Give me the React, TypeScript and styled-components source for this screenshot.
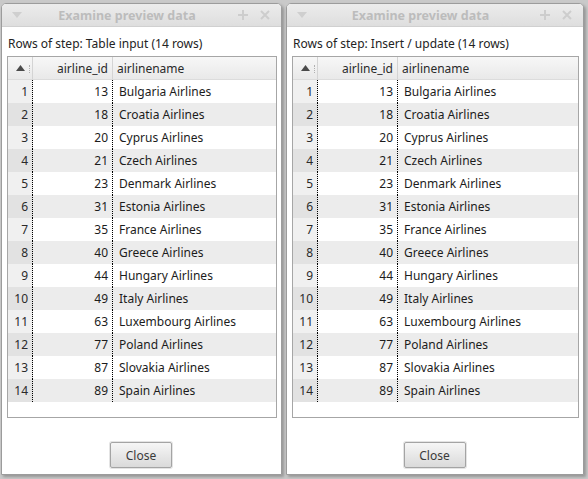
import styled, { createGlobalStyle } from 'styled-components';

const airlines: [number, string][] = [
  [13, 'Bulgaria Airlines'],
  [18, 'Croatia Airlines'],
  [20, 'Cyprus Airlines'],
  [21, 'Czech Airlines'],
  [23, 'Denmark Airlines'],
  [31, 'Estonia Airlines'],
  [35, 'France Airlines'],
  [40, 'Greece Airlines'],
  [44, 'Hungary Airlines'],
  [49, 'Italy Airlines'],
  [63, 'Luxembourg Airlines'],
  [77, 'Poland Airlines'],
  [87, 'Slovakia Airlines'],
  [89, 'Spain Airlines'],
];

const GlobalStyle = createGlobalStyle`
  html, body {
    margin: 0;
    padding: 0;
    background: #c9c9c9;
    font-family: "Noto Sans", "Open Sans", sans-serif;
    overflow: hidden;
  }
`;

const Desktop = styled.div`
  display: flex;
  align-items: flex-start;
  gap: 4px;
  padding: 3px 0 0 1px;
  width: 588px;
  height: 479px;
  box-sizing: border-box;
`;

const Window = styled.div<{ $width: number }>`
  width: ${(p) => p.$width}px;
  height: 472px;
  box-sizing: border-box;
  border: 1px solid #9c9c9c;
  border-radius: 5px 5px 0 0;
  background: #ffffff;
  display: flex;
  flex-direction: column;
  box-shadow: 2px 2px 3px rgba(0, 0, 0, 0.25);
`;

const TitleBar = styled.div`
  height: 22px;
  flex: none;
  display: flex;
  align-items: center;
  padding: 0 9px 0 10px;
  border-radius: 4px 4px 0 0;
  background: linear-gradient(#ececec, #dedede);
  border-bottom: 1px solid #d0d0d0;
`;

const TitleText = styled.div`
  flex: 1;
  text-align: center;
  font-size: 12.5px;
  font-weight: bold;
  color: #bcbcbc;
  padding-left: 4px;
`;

const TitleButton = styled.span`
  width: 14px;
  height: 14px;
  display: flex;
  align-items: center;
  justify-content: center;
  color: #c4c4c4;
  margin-left: 8px;
`;

const Body = styled.div`
  flex: 1;
  display: flex;
  flex-direction: column;
  padding: 0 4px 0 5px;
`;

const StepLabel = styled.div`
  font-size: 12px;
  color: #232323;
  height: 29px;
  line-height: 18px;
  padding: 8px 0 0 1px;
  box-sizing: border-box;
`;

const TableFrame = styled.div`
  height: 362px;
  box-sizing: border-box;
  border: 1px solid #a6a6a6;
  background: #ffffff;
`;

const Grid = styled.div`
  display: grid;
  grid-template-columns: 25px 80px 1fr;
`;

const HeadCell = styled.div<{ $align?: string; $sep?: boolean }>`
  height: 23px;
  box-sizing: border-box;
  display: flex;
  align-items: center;
  justify-content: ${(p) => p.$align ?? 'flex-start'};
  padding: 0 4px 0 4px;
  font-size: 12px;
  color: #2a2a2a;
  background: linear-gradient(#f7f7f7, #e9e9e9);
  border-right: ${(p) => (p.$sep ? '1px solid #d4d4d4' : 'none')};
  border-bottom: 1px solid #dcdcdc;
  position: relative;
`;

const SortDots = styled.span`
  position: absolute;
  right: 2px;
  top: 8px;
  height: 8px;
  border-right: 1px dotted #b0b0b0;
`;

const IndexCell = styled.div<{ $even: boolean }>`
  height: 23px;
  box-sizing: border-box;
  display: flex;
  align-items: center;
  justify-content: flex-end;
  padding-right: 4px;
  font-size: 12px;
  color: #2a2a2a;
  background: ${(p) => (p.$even ? '#e2e2e2' : '#f0f0f0')};
  border-right: 1px dotted #000;
`;

const DataCell = styled.div<{ $even: boolean; $right?: boolean; $dotted?: boolean }>`
  height: 23px;
  box-sizing: border-box;
  display: flex;
  align-items: center;
  justify-content: ${(p) => (p.$right ? 'flex-end' : 'flex-start')};
  padding: ${(p) => (p.$right ? '0 4px 0 0' : '0 0 0 6px')};
  font-size: 12px;
  color: #1c1c1c;
  white-space: nowrap;
  background: ${(p) => (p.$even ? '#ececec' : '#ffffff')};
  border-right: ${(p) => (p.$dotted ? '1px dotted #000' : 'none')};
`;

const Footer = styled.div`
  flex: 1;
  display: flex;
  justify-content: center;
  align-items: flex-start;
  padding-top: 24px;
`;

const Button = styled.button`
  width: 62px;
  height: 26px;
  margin-right: 2px;
  border: 1px solid #a4a4a4;
  border-radius: 2px;
  background: linear-gradient(#f6f6f6, #dadada);
  box-shadow: 0 0 0 1px #e4e4e4;
  font-family: "Noto Sans", "Open Sans", sans-serif;
  font-size: 12px;
  color: #3a3a3a;
  padding: 0;
`;

const ArrowDown = () => (
  <svg width="10" height="6" viewBox="0 0 10 6">
    <path d="M0 0 L10 0 L5 6 Z" fill="#cfcfcf" />
  </svg>
);

const Plus = () => (
  <svg width="10" height="10" viewBox="0 0 10 10">
    <path d="M5 0 V10 M0 5 H10" stroke="#cdcdcd" strokeWidth="2" />
  </svg>
);

const Cross = () => (
  <svg width="10" height="10" viewBox="0 0 10 10">
    <path d="M1 1 L9 9 M9 1 L1 9" stroke="#cdcdcd" strokeWidth="2" />
  </svg>
);

const SortUp = () => (
  <svg width="9" height="6" viewBox="0 0 9 6">
    <path d="M0 6 L9 6 L4.5 0 Z" fill="#4a4a4a" />
  </svg>
);

const PreviewWindow = ({ width, step }: { width: number; step: string }) => (
  <Window $width={width}>
    <TitleBar>
      <ArrowDown />
      <TitleText>Examine preview data</TitleText>
      <TitleButton>
        <Plus />
      </TitleButton>
      <TitleButton>
        <Cross />
      </TitleButton>
    </TitleBar>
    <Body>
      <StepLabel>Rows of step: {step} (14 rows)</StepLabel>
      <TableFrame>
        <Grid>
          <HeadCell $align="center" $sep>
            <SortUp />
            <SortDots />
          </HeadCell>
          <HeadCell $align="flex-end" $sep>
            airline_id
          </HeadCell>
          <HeadCell>airlinename</HeadCell>
          {airlines.map(([id, name], idx) => {
            const even = idx % 2 === 1;
            return [
              <IndexCell key={`i${idx}`} $even={even}>
                {idx + 1}
              </IndexCell>,
              <DataCell key={`a${idx}`} $even={even} $right $dotted>
                {id}
              </DataCell>,
              <DataCell key={`n${idx}`} $even={even}>
                {name}
              </DataCell>,
            ];
          })}
        </Grid>
      </TableFrame>
      <Footer>
        <Button>Close</Button>
      </Footer>
    </Body>
  </Window>
);

export default function App() {
  return (
    <>
      <GlobalStyle />
      <Desktop>
        <PreviewWindow width={281} step="Table input" />
        <PreviewWindow width={298} step="Insert / update" />
      </Desktop>
    </>
  );
}
